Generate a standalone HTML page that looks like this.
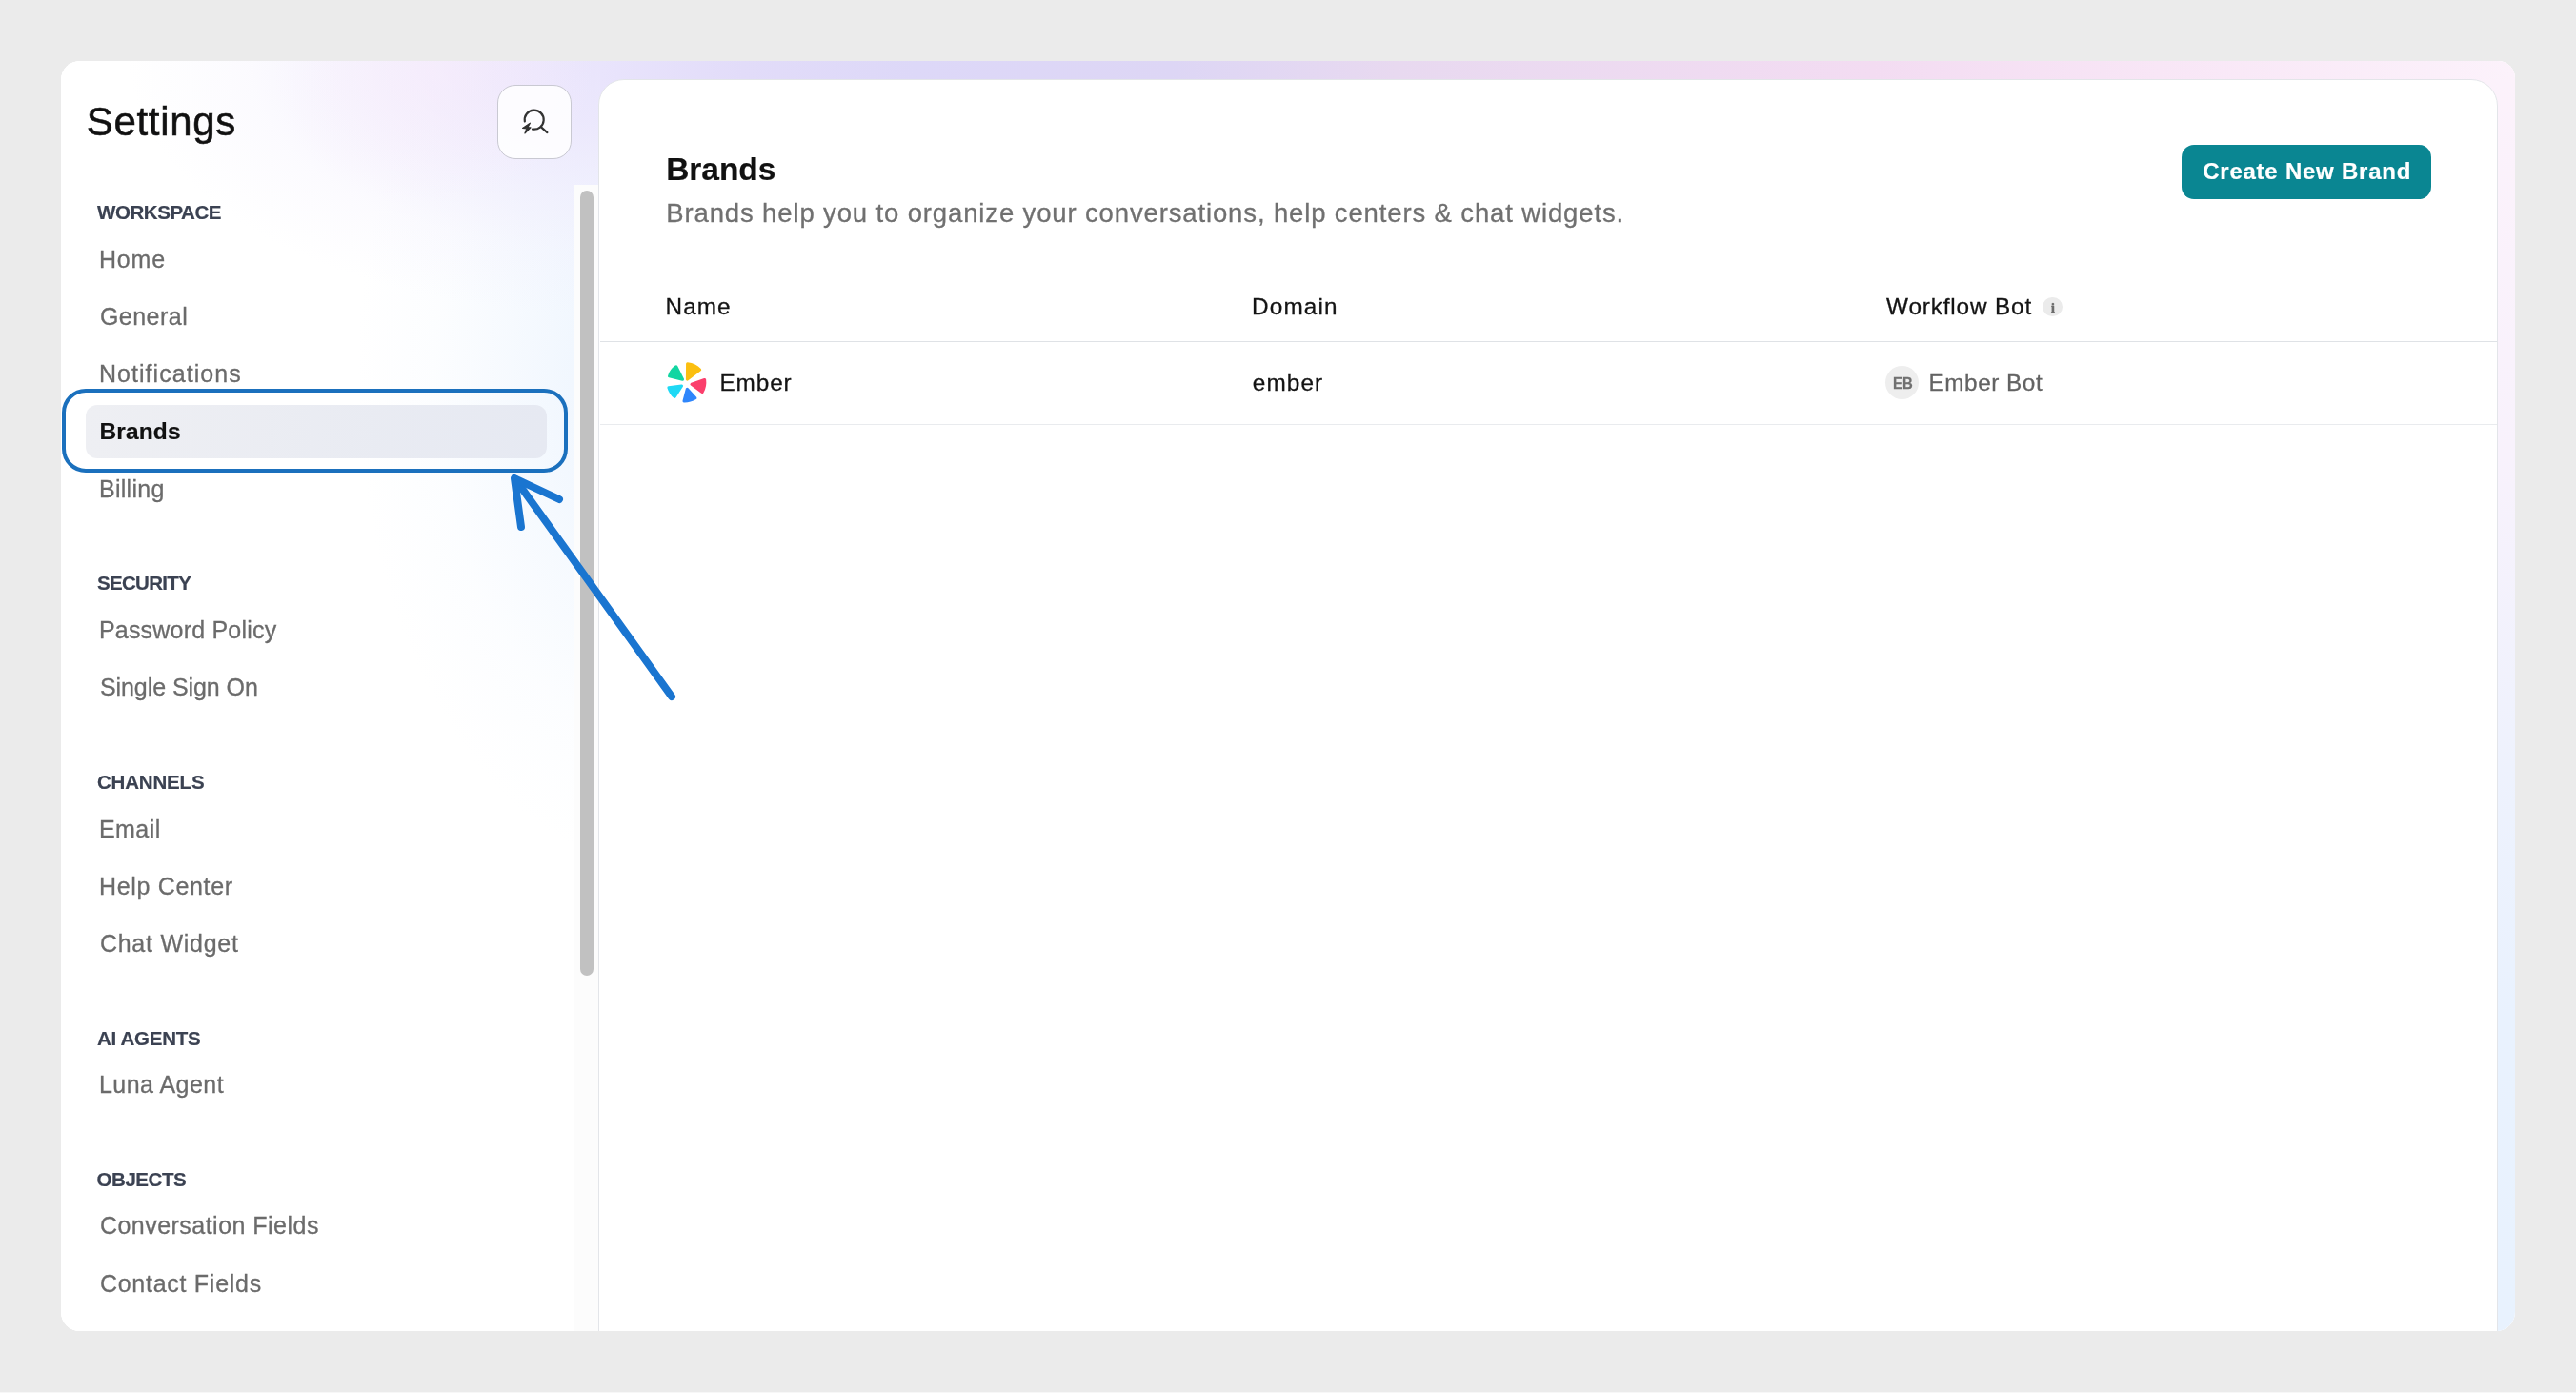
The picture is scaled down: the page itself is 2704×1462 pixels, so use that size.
<!DOCTYPE html>
<html><head><meta charset="utf-8">
<style>
*{box-sizing:border-box;margin:0;padding:0}
html,body{width:2704px;height:1462px;overflow:hidden;background:#ebebeb;font-family:"Liberation Sans",sans-serif}
#card{position:absolute;left:64px;top:64px;width:2576px;height:1333px;border-radius:20px 18px 20px 20px;overflow:hidden;background:#fff}
#bg{position:absolute;inset:0;background:#fff}
#sb{position:absolute;left:0;top:0;width:566px;height:1333px;background:
 radial-gradient(ellipse 170px 140px at 392px 10px, rgba(250,236,251,.5) 0%, rgba(250,236,251,.28) 50%, rgba(250,236,251,0) 100%),
 radial-gradient(ellipse 500px 270px at 570px -4px, rgba(233,228,252,1) 0%, rgba(233,228,252,0.82) 25%, rgba(233,228,252,0.48) 50%, rgba(233,228,252,0.16) 75%, rgba(233,228,252,0) 100%),
 radial-gradient(ellipse 330px 520px at 640px 330px, rgba(236,244,254,1) 0%, rgba(236,244,254,0.82) 25%, rgba(236,244,254,0.48) 50%, rgba(236,244,254,0.16) 75%, rgba(236,244,254,0) 100%),
 #fff}
#top{position:absolute;left:566px;top:0;width:2010px;height:60px;background:linear-gradient(90deg,#e9e4fc 0px,#e2dcf9 150px,#ddd8f8 330px,#ddd6f5 600px,#e8d9f0 836px,#f3dcf2 1336px,#f8e6f6 1636px,#fcf2fb 2010px)}
#right{position:absolute;left:2540px;top:20px;width:36px;height:1313px;background:linear-gradient(180deg,#fcf2fb 0%,#f8f2fc 30%,#eef2fd 55%,#e9f2fe 75%,#e8f2fe 100%)}
.abs{position:absolute;white-space:nowrap;line-height:1}
#main{position:absolute;left:564.2px;top:18.5px;width:1993.9px;height:1340px;background:#fff;border:1.5px solid #e3e5e9;border-radius:27px 28px 0 0}
.lbl{color:#3b4252}
.it{color:#6b6b6b}
.th{color:#141414}
#track{position:absolute;left:538px;top:130px;width:27px;height:1210px;background:#fcfcfc;border-left:1.5px solid #e6e8ea}
#thumb{position:absolute;left:545px;top:136px;width:14px;height:824px;border-radius:7px;background:#c1c1c1}
#sbtn{position:absolute;left:458px;top:25px;width:78px;height:78px;border-radius:19px;border:1.5px solid #c9c9d2;background:rgba(255,255,255,.85)}
#sel{position:absolute;left:26px;top:361px;width:484px;height:56px;border-radius:12px;background:linear-gradient(90deg,#eeeff3,#e6e9f2)}
#hl{position:absolute;left:1.3px;top:343.8px;width:530.4px;height:88.6px;border-radius:25px;border:4.4px solid #1b70bd}
.hline{position:absolute;left:566px;width:1991px;height:1.5px}
#btn{position:absolute;left:2226px;top:88px;width:262px;height:57px;border-radius:13px;background:#0a8692}
#eb{position:absolute;left:1915px;top:320px;width:35px;height:35px;border-radius:50%;background:#eeeeee}
#info{position:absolute;left:2080.3px;top:247.7px;width:20.8px;height:20.8px;border-radius:50%;background:#ebebeb;color:#777;font-family:"Liberation Serif",serif;font-weight:700;font-size:15px;text-align:center;line-height:20px}
</style></head><body>
<div id="card">
 <div id="bg"></div><div id="sb"></div><div id="top"></div><div id="right"></div>
 <div id="track"></div><div id="thumb"></div>
 <div id="main"></div>
 <div class="hline" style="top:293.5px;background:#dfe2e6"></div>
 <div class="hline" style="top:380.5px;background:#e9ebee"></div>
 <div id="sbtn"></div>
 <svg class="abs" style="left:480px;top:47px" width="36" height="36" viewBox="0 0 36 36" fill="none" stroke="#333" stroke-width="2.2" stroke-linecap="round" stroke-linejoin="round">
  <path d="M6.85 16.44 A10 10 0 1 1 14.96 24.55"/>
  <path d="M24.6 22.9 L30.4 28.1"/>
  <path d="M12.4 18.2 L4.6 23.4 L8.9 23.8 L6.9 29 L13 22.9 L9.9 22.6 Z" fill="#333" stroke-width="1.2"/>
 </svg>
 <div id="sel"></div>
 <div id="btn"></div>
 <div id="eb"></div>
 <div id="info"></div>
 <svg class="abs" style="left:631.5px;top:313px" width="50" height="50" viewBox="200 220 640 640">
  <g stroke-width="40" stroke-linejoin="round">
  <path d="M528 282 Q632 294 694 362 L526 490 Z" fill="#fbbf10" stroke="#fbbf10"/>
  <path d="M376 320 Q304 372 284 448 L462 492 Z" fill="#12d6a2" stroke="#12d6a2"/>
  <path d="M276 600 Q302 680 356 724 L450 578 Z" fill="#1fd9f5" stroke="#1fd9f5"/>
  <path d="M482 782 Q564 784 634 742 L524 622 Z" fill="#2f86fb" stroke="#2f86fb"/>
  <path d="M758 496 Q770 586 726 660 L584 557 Z" fill="#fb3f6c" stroke="#fb3f6c"/>
  </g>
 </svg>
<div id="txt" style="position:absolute;left:0;top:0;width:2576px;height:1333px;will-change:transform">
<div class="abs " style="left:26.80px;top:43.15px;font-size:42.0px;font-weight:400;letter-spacing:0.677px;-webkit-text-stroke:0.3px;color:#111;-webkit-text-stroke:0.55px;">Settings</div>
<div class="abs lbl" style="left:38.10px;top:149.35px;font-size:20.5px;font-weight:700;letter-spacing:-0.455px;-webkit-text-stroke:0.2px;">WORKSPACE</div>
<div class="abs it" style="left:39.90px;top:195.84px;font-size:25px;font-weight:400;letter-spacing:0.872px;-webkit-text-stroke:0.3px;">Home</div>
<div class="abs it" style="left:40.90px;top:256.04px;font-size:25px;font-weight:400;letter-spacing:0.486px;-webkit-text-stroke:0.3px;">General</div>
<div class="abs it" style="left:39.90px;top:316.24px;font-size:25px;font-weight:400;letter-spacing:1.061px;-webkit-text-stroke:0.3px;">Notifications</div>
<div class="abs " style="left:40.40px;top:376.86px;font-size:24.5px;font-weight:700;letter-spacing:0.143px;-webkit-text-stroke:0.2px;color:#111;">Brands</div>
<div class="abs it" style="left:39.90px;top:436.64px;font-size:25px;font-weight:400;letter-spacing:0.317px;-webkit-text-stroke:0.3px;">Billing</div>
<div class="abs lbl" style="left:37.90px;top:538.35px;font-size:20.5px;font-weight:700;letter-spacing:-0.668px;-webkit-text-stroke:0.2px;">SECURITY</div>
<div class="abs it" style="left:39.90px;top:584.84px;font-size:25px;font-weight:400;letter-spacing:0.207px;-webkit-text-stroke:0.3px;">Password Policy</div>
<div class="abs it" style="left:40.90px;top:645.04px;font-size:25px;font-weight:400;letter-spacing:-0.059px;-webkit-text-stroke:0.3px;">Single Sign On</div>
<div class="abs lbl" style="left:37.90px;top:747.35px;font-size:20.5px;font-weight:700;letter-spacing:-0.174px;-webkit-text-stroke:0.2px;">CHANNELS</div>
<div class="abs it" style="left:39.90px;top:793.84px;font-size:25px;font-weight:400;letter-spacing:0.460px;-webkit-text-stroke:0.3px;">Email</div>
<div class="abs it" style="left:39.90px;top:854.04px;font-size:25px;font-weight:400;letter-spacing:0.683px;-webkit-text-stroke:0.3px;">Help Center</div>
<div class="abs it" style="left:40.90px;top:914.24px;font-size:25px;font-weight:400;letter-spacing:0.748px;-webkit-text-stroke:0.3px;">Chat Widget</div>
<div class="abs lbl" style="left:37.90px;top:1015.75px;font-size:20.5px;font-weight:700;letter-spacing:-0.256px;-webkit-text-stroke:0.2px;">AI AGENTS</div>
<div class="abs it" style="left:39.90px;top:1062.24px;font-size:25px;font-weight:400;letter-spacing:0.473px;-webkit-text-stroke:0.3px;">Luna Agent</div>
<div class="abs lbl" style="left:37.60px;top:1163.95px;font-size:20.5px;font-weight:700;letter-spacing:-0.459px;-webkit-text-stroke:0.2px;">OBJECTS</div>
<div class="abs it" style="left:40.90px;top:1210.44px;font-size:25px;font-weight:400;letter-spacing:0.476px;-webkit-text-stroke:0.3px;">Conversation Fields</div>
<div class="abs it" style="left:40.90px;top:1270.64px;font-size:25px;font-weight:400;letter-spacing:0.732px;-webkit-text-stroke:0.3px;">Contact Fields</div>
<div class="abs " style="left:635.20px;top:96.74px;font-size:33.5px;font-weight:700;letter-spacing:-0.037px;-webkit-text-stroke:0.2px;color:#111;">Brands</div>
<div class="abs " style="left:635.30px;top:146.12px;font-size:27.5px;font-weight:400;letter-spacing:0.863px;-webkit-text-stroke:0.3px;color:#707070;">Brands help you to organize your conversations, help centers &amp; chat widgets.</div>
<div class="abs th" style="left:634.60px;top:246.13px;font-size:24.3px;font-weight:400;letter-spacing:1.034px;-webkit-text-stroke:0.3px;">Name</div>
<div class="abs th" style="left:1250.00px;top:245.93px;font-size:24.3px;font-weight:400;letter-spacing:1.158px;-webkit-text-stroke:0.3px;">Domain</div>
<div class="abs th" style="left:1916.10px;top:245.93px;font-size:24.3px;font-weight:400;letter-spacing:0.852px;-webkit-text-stroke:0.3px;">Workflow Bot</div>
<div class="abs th" style="left:691.50px;top:325.63px;font-size:24.3px;font-weight:400;letter-spacing:0.907px;-webkit-text-stroke:0.3px;">Ember</div>
<div class="abs th" style="left:1250.80px;top:325.63px;font-size:24.3px;font-weight:400;letter-spacing:1.106px;-webkit-text-stroke:0.3px;">ember</div>
<div class="abs " style="left:1960.60px;top:325.63px;font-size:24.3px;font-weight:400;letter-spacing:0.534px;-webkit-text-stroke:0.3px;color:#636363;">Ember Bot</div>
<div class="abs " style="left:2248.20px;top:104.38px;font-size:24px;font-weight:700;letter-spacing:0.762px;-webkit-text-stroke:0.2px;color:#fff;">Create New Brand</div>
<div class="abs" style="left:1922.60px;top:330.33px;font-size:16.5px;font-weight:700;color:#707070;-webkit-text-stroke:0.3px;transform-origin:0 0;transform:scaleX(0.9)">EB</div>
<div class="abs" style="left:2088.70px;top:250.62px;font-size:15.5px;font-weight:700;color:#6c6c6c;-webkit-text-stroke:0.3px;font-family:'Liberation Serif',serif">i</div>
</div>
 <div id="hl"></div>
 <svg class="abs" style="left:440px;top:400px" width="260" height="300" viewBox="504 464 260 300" fill="none" stroke="#1a75d0" stroke-width="8" stroke-linecap="round" stroke-linejoin="round">
  <path d="M705 731 L541 503"/>
  <path d="M587 524 L540 502 L547 553"/>
 </svg>
</div>
<div style="position:absolute;left:0;top:1461px;width:2704px;height:1px;background:#f7f7f7"></div>
</body></html>
